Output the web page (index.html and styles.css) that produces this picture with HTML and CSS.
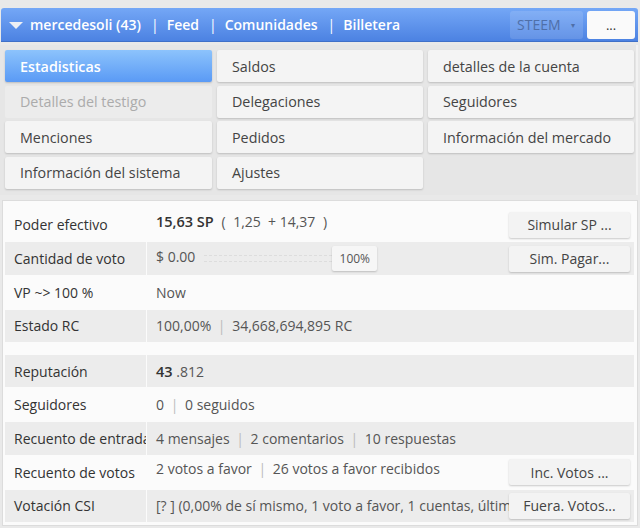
FILE: index.html
```html
<!DOCTYPE html>
<html lang="es">

<head>
    <meta charset="UTF-8">
    <meta name="viewport" content="width=device-width, initial-scale=1.0">
    <title>Billetera</title>
    <link rel="stylesheet" href="styles.css">
</head>

<body>
    <div class="topbar">
        <div class="nav">
            <span class="caret"></span>
            <span class="link">mercedesoli (43)</span>
            <span class="bar">|</span>
            <span class="link">Feed</span>
            <span class="bar">|</span>
            <span class="link">Comunidades</span>
            <span class="bar">|</span>
            <span class="link">Billetera</span>
        </div>
        <div class="tools">
            <span class="coin">STEEM <small>▾</small></span>
            <button class="more">...</button>
        </div>
    </div>

    <div class="menu">
        <div class="tab active">Estadisticas</div>
        <div class="tab">Saldos</div>
        <div class="tab">detalles de la cuenta</div>
        <div class="tab disabled">Detalles del testigo</div>
        <div class="tab">Delegaciones</div>
        <div class="tab">Seguidores</div>
        <div class="tab">Menciones</div>
        <div class="tab">Pedidos</div>
        <div class="tab">Información del mercado</div>
        <div class="tab">Información del sistema</div>
        <div class="tab">Ajustes</div>
    </div>

    <div class="panel">
        <table class="stats">
            <tr>
                <td class="label">Poder efectivo</td>
                <td class="value"><b>15,63 SP</b> <span class="paren">(</span> 1,25 &nbsp;+ 14,37 <span class="paren">)</span>
                    <button class="act">Simular SP ...</button></td>
            </tr>
            <tr class="odd">
                <td class="label">Cantidad de voto</td>
                <td class="value">
                    <span class="amount">$ 0.00</span>
                    <span class="slider"></span>
                    <span class="pct">100%</span>
                    <button class="act">Sim. Pagar...</button>
                </td>
            </tr>
            <tr>
                <td class="label">VP ~&gt; 100 %</td>
                <td class="value">Now</td>
            </tr>
            <tr class="odd">
                <td class="label">Estado RC</td>
                <td class="value">100,00% <span class="sep">|</span> 34,668,694,895 RC</td>
            </tr>
            <tr class="gap">
                <td></td>
                <td></td>
            </tr>
            <tr class="odd">
                <td class="label">Reputación</td>
                <td class="value"><b>43</b> .812</td>
            </tr>
            <tr>
                <td class="label">Seguidores</td>
                <td class="value">0 <span class="sep">|</span> 0 seguidos</td>
            </tr>
            <tr class="odd">
                <td class="label"><div class="clip">Recuento de entradas</div></td>
                <td class="value">4 mensajes <span class="sep">|</span> 2 comentarios <span class="sep">|</span> 10 respuestas</td>
            </tr>
            <tr>
                <td class="label">Recuento de votos</td>
                <td class="value">2 votos a favor <span class="sep">|</span> 26 votos a favor recibidos
                    <button class="act">Inc. Votos ...</button></td>
            </tr>
            <tr class="odd">
                <td class="label">Votación CSI</td>
                <td class="value"><div class="csi"><span class="clip">[? ] (0,00% de sí mismo, 1 voto a favor, 1 cuentas, último 0,00% ...)</span>
                    <button class="act">Fuera. Votos...</button></div></td>
            </tr>
        </table>
    </div>
</body>

</html>
```

FILE: styles.css
```css
body {
    margin: 0;
    background-color: #e9e9e9;
    font-family: "Open Sans", "Liberation Sans", sans-serif;
    font-size: 14px;
    color: #333;
}

/* barra superior azul */
.topbar {
    margin: 8px 2px 0 1px;
    height: 33px;
    display: flex;
    align-items: center;
    justify-content: space-between;
    background: linear-gradient(#74a7f6, #4c82e2);
    border-bottom: 1px solid #3f70c8;
    border-radius: 3px 3px 0 0;
    color: white;
}

.nav {
    display: flex;
    align-items: center;
    font-size: 14px;
    font-weight: 600;
    padding-left: 8px;
}

.caret {
    width: 0;
    height: 0;
    border-left: 7px solid transparent;
    border-right: 7px solid transparent;
    border-top: 7px solid #eef0f4;
    margin-right: 7px;
    margin-top: 2px;
}

.bar {
    margin: 0 8px 0 10px;
    font-weight: 400;
}

.tools {
    display: flex;
    align-items: center;
    gap: 4px;
    padding-right: 3px;
}

.coin {
    width: 73px;
    height: 28px;
    box-sizing: border-box;
    padding-left: 7px;
    display: flex;
    align-items: center;
    background-color: rgba(255, 255, 255, 0.13);
    border-radius: 3px;
    color: #4f6fa8;
    font-size: 14px;
}

.coin small {
    font-size: 8px;
    margin-left: 10px;
}

.more {
    width: 48px;
    height: 28px;
    border: none;
    border-radius: 3px;
    background-color: #fafafa;
    color: #333;
    font-family: inherit;
    font-size: 13px;
    padding: 0;
}

/* menu de pestañas */
.menu {
    margin: 3px 2px 0 0;
    padding: 5px 4px 6px 5px;
    display: grid;
    grid-template-columns: 207px 206px 206px;
    grid-auto-rows: 32px;
    column-gap: 5px;
    row-gap: 3.5px;
    background-color: #e6e6e6;
    border-right: 2px solid #f2f2f2;
}

.tab {
    display: flex;
    align-items: center;
    padding-left: 15px;
    background-color: #f4f4f4;
    border-radius: 2px;
    box-shadow: 0 1px 2px rgba(0, 0, 0, 0.18);
    color: #444;
    font-size: 14.3px;
}

.tab.active {
    background: linear-gradient(#8cc3fc, #5a9af5);
    color: white;
    font-weight: 600;
}

.tab.disabled {
    background-color: #ececec;
    color: #ababab;
    box-shadow: none;
}

/* panel de estadisticas */
.panel {
    margin: 5px 2px 0 2px;
    padding: 7px 3px 2px 2px;
    background-color: #fbfbfb;
    border: 1px solid #dcdcdc;
}

.stats {
    width: 100%;
    border-collapse: separate;
    border-spacing: 0 1px;
    table-layout: fixed;
}

.stats tr {
    height: 32.7px;
}

.stats tr.odd td {
    background-color: #ececec;
}

.stats tr.gap {
    height: 10.5px;
}

.stats td {
    padding: 0 0 0 9px;
    white-space: nowrap;
}

.stats .label {
    width: 132px;
    border-right: 1px solid #fbfbfb;
    color: #333;
    font-size: 14px;
}

.stats .value {
    padding-left: 9px;
    padding-right: 4px;
    color: #555;
}

.clip {
    overflow: hidden;
}

.value b {
    font-weight: 600;
    color: #333;
    font-size: 14.5px;
}

.paren {
    margin: 0 4px;
}

.sep {
    color: #bbb;
    margin: 0 3px;
}

.act {
    float: right;
    width: 121px;
    height: 26px;
    border: none;
    border-radius: 2px;
    background-color: #f3f3f3;
    box-shadow: 0 1px 2px rgba(0, 0, 0, 0.2);
    font-family: inherit;
    font-size: 14px;
    color: #444;
    padding: 0;
}

.amount {
    display: inline-block;
    width: 44px;
}

.slider {
    display: inline-block;
    vertical-align: middle;
    width: 128px;
    height: 5px;
    border-top: 1px dashed #ddd;
    border-bottom: 1px dashed #ddd;
}

.pct {
    display: inline-block;
    vertical-align: middle;
    margin-left: -3px;
    width: 45px;
    height: 25px;
    line-height: 25px;
    text-align: center;
    font-size: 12px;
    background-color: #f6f6f6;
    border-radius: 2px;
    box-shadow: 0 1px 2px rgba(0, 0, 0, 0.2);
}

.csi {
    display: flex;
    align-items: center;
}

.csi .clip {
    flex: 1;
    white-space: nowrap;
}

.csi .act {
    flex: none;
}
```
